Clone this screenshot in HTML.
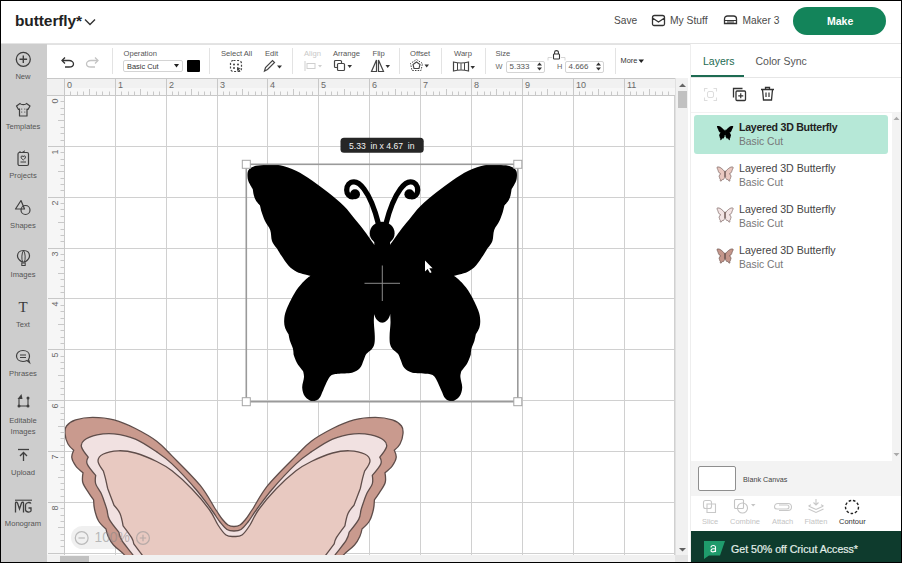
<!DOCTYPE html>
<html><head><meta charset="utf-8">
<style>
*{margin:0;padding:0;box-sizing:border-box}
html,body{width:902px;height:563px;overflow:hidden;background:#000}
body{font-family:"Liberation Sans",sans-serif;position:relative}
.a{position:absolute}
.t{position:absolute;white-space:nowrap;line-height:1}
#app{position:absolute;left:1px;top:1px;width:900px;height:561px;background:#fff;overflow:hidden}
</style></head><body>
<div id="app"></div>
<!-- header -->
<div class="a" style="left:1px;top:1px;width:900px;height:42px;background:#fff"></div>
<div class="a" style="left:1px;top:43px;width:900px;height:1px;background:#e4e4e4"></div>
<div class="t" style="left:15px;top:13px;font-size:15.5px;font-weight:bold;color:#222;letter-spacing:-0.1px">butterfly*</div>
<svg class="a" style="left:83.5px;top:17.5px" width="12" height="8"><path d="M1 1.5 L6 6.5 L11 1.5" fill="none" stroke="#333" stroke-width="1.4"/></svg>
<div class="t" style="left:614px;top:16px;font-size:10.2px;color:#4a4a4a">Save</div>
<svg class="a" style="left:651px;top:14px" width="15" height="13"><path d="M3.5 1.5 L11.5 1.5 C12.7 1.5 13.5 2.3 13.5 3.5 L13.5 10 C13.5 10.8 12.8 11.5 12 11.5 L3 11.5 C2.2 11.5 1.5 10.8 1.5 10 L1.5 3.5 C1.5 2.3 2.3 1.5 3.5 1.5Z M1.5 4 L7.5 8 L13.5 4" fill="none" stroke="#333" stroke-width="1.3"/></svg>
<div class="t" style="left:670px;top:15.5px;font-size:10.3px;color:#4a4a4a">My Stuff</div>
<svg class="a" style="left:723px;top:15px" width="16" height="10"><path d="M1.5 8.5 L1.5 4 C1.5 2.2 2.8 1 4.5 1 L10.5 1 C12.2 1 13.5 2.2 13.5 4 L13.5 8.5 Z" fill="none" stroke="#333" stroke-width="1.3"/><path d="M1.5 5.5 L13.5 5.5 M4 7 L11 7" stroke="#333" stroke-width="1.1"/></svg>
<div class="t" style="left:742.5px;top:16px;font-size:10.2px;color:#4a4a4a">Maker 3</div>
<div class="a" style="left:793px;top:6.5px;width:93px;height:28px;border-radius:14px;background:#13845a"></div>
<div class="t" style="left:827px;top:15.5px;font-size:10.5px;font-weight:bold;color:#fff">Make</div>

<!-- sidebar -->
<div class="a" style="left:1px;top:44px;width:47px;height:518px;background:#cdcdcd"></div>


<!-- sidebar items -->
<svg class="a" style="left:15px;top:51px" width="17" height="17"><circle cx="8.3" cy="8.3" r="7" fill="none" stroke="#3f3f3f" stroke-width="1.3"/><path d="M8.3 4.5 L8.3 12.1 M4.5 8.3 L12.1 8.3" stroke="#3f3f3f" stroke-width="1.4"/></svg>
<div class="t" style="left:0px;width:46px;text-align:center;top:72.5px;font-size:7.6px;color:#555">New</div>
<svg class="a" style="left:15px;top:102px" width="17" height="16"><path d="M5 1.5 L1.5 4 L3.5 7.5 L4.5 7 L4.5 14 L12 14 L12 7 L13 7.5 L15 4 L11.5 1.5 C10.5 3 6 3 5 1.5Z" fill="none" stroke="#3f3f3f" stroke-width="1.2" stroke-linejoin="round"/><circle cx="6.7" cy="7" r=".6" fill="#3f3f3f"/><circle cx="9.8" cy="7" r=".6" fill="#3f3f3f"/><circle cx="6.7" cy="10" r=".6" fill="#3f3f3f"/><circle cx="9.8" cy="10" r=".6" fill="#3f3f3f"/></svg>
<div class="t" style="left:0px;width:46px;text-align:center;top:122.5px;font-size:7.6px;color:#555">Templates</div>
<svg class="a" style="left:16px;top:150px" width="15" height="17"><rect x="2" y="2.5" width="10.5" height="13" rx="1.5" fill="none" stroke="#3f3f3f" stroke-width="1.2"/><path d="M4 2.5 L4 1 M6 2.5 L9 0.8" stroke="#3f3f3f" stroke-width="1"/><path d="M5 7 C5 5.5 7.2 5.5 7.2 7 C7.2 5.5 9.5 5.5 9.5 7 C9.5 8.5 7.2 10 7.2 10 C7.2 10 5 8.5 5 7Z" fill="none" stroke="#3f3f3f" stroke-width="1"/><path d="M4.5 12 L10 12" stroke="#3f3f3f" stroke-width="1"/></svg>
<div class="t" style="left:0px;width:46px;text-align:center;top:172px;font-size:7.6px;color:#555">Projects</div>
<svg class="a" style="left:14px;top:199px" width="19" height="17"><path d="M7 1.5 L1.5 10 L10.5 10 Z" fill="none" stroke="#3f3f3f" stroke-width="1.2" stroke-linejoin="round"/><circle cx="11.5" cy="11" r="4.5" fill="none" stroke="#3f3f3f" stroke-width="1.2"/></svg>
<div class="t" style="left:0px;width:46px;text-align:center;top:221.5px;font-size:7.6px;color:#555">Shapes</div>
<svg class="a" style="left:16px;top:249px" width="15" height="18"><path d="M7.5 1.5 C3.5 1.5 1.5 4 1.5 7 C1.5 10 4.5 12 6 13 L9 13 C10.5 12 13.5 10 13.5 7 C13.5 4 11.5 1.5 7.5 1.5Z" fill="none" stroke="#3f3f3f" stroke-width="1.2"/><path d="M7.5 1.5 C5.5 4 5.5 10 6.5 13 M7.5 1.5 C9.5 4 9.5 10 8.5 13" fill="none" stroke="#3f3f3f" stroke-width="1"/><rect x="5.8" y="14" width="3.4" height="2.5" fill="none" stroke="#3f3f3f" stroke-width="1"/></svg>
<div class="t" style="left:0px;width:46px;text-align:center;top:271px;font-size:7.6px;color:#555">Images</div>
<div class="t" style="left:0px;width:46px;text-align:center;top:299.5px;font-size:15px;font-family:'Liberation Serif',serif;color:#3a3a3a">T</div>
<div class="t" style="left:0px;width:46px;text-align:center;top:320.5px;font-size:7.6px;color:#555">Text</div>
<svg class="a" style="left:15px;top:349px" width="17" height="16"><path d="M8 1.5 C4 1.5 1.5 4 1.5 7 C1.5 10 4 12.5 8 12.5 C9.5 12.5 11 12 12 11.5 L14.5 13.5 L13.5 10.5 C14.2 9.5 14.5 8.3 14.5 7 C14.5 4 12 1.5 8 1.5Z" fill="none" stroke="#3f3f3f" stroke-width="1.2"/><path d="M5 6 L11 6 M5 8.5 L11 8.5" stroke="#3f3f3f" stroke-width="1.1"/></svg>
<div class="t" style="left:0px;width:46px;text-align:center;top:370px;font-size:7.6px;color:#555">Phrases</div>
<svg class="a" style="left:15px;top:393px" width="17" height="16"><path d="M4 5.5 L4 13 L13 13 L13 5.5" fill="none" stroke="#3f3f3f" stroke-width="1.1"/><circle cx="4" cy="13" r="1.5" fill="#3f3f3f"/><circle cx="13" cy="13" r="1.5" fill="#3f3f3f"/><circle cx="13" cy="5" r="1.5" fill="#3f3f3f"/><path d="M6.5 1 L2.5 6 L7.5 6Z" fill="#3f3f3f"/></svg>
<div class="t" style="left:0px;width:46px;text-align:center;top:416.5px;font-size:7.6px;color:#555">Editable</div>
<div class="t" style="left:0px;width:46px;text-align:center;top:427.5px;font-size:7.6px;color:#555">Images</div>
<svg class="a" style="left:16px;top:448px" width="15" height="14"><path d="M2 1.5 L13 1.5" stroke="#3f3f3f" stroke-width="1.3"/><path d="M7.5 13 L7.5 5 M4 8 L7.5 4.5 L11 8" fill="none" stroke="#3f3f3f" stroke-width="1.3"/></svg>
<div class="t" style="left:0px;width:46px;text-align:center;top:468.5px;font-size:7.6px;color:#555">Upload</div>
<svg class="a" style="left:14px;top:499px" width="19" height="15"><path d="M1 1.2 L18 1.2" stroke="#3f3f3f" stroke-width="1.1"/><path d="M1.5 13.5 L1.5 4 C1.5 3 3 3 3.5 4 L5.5 10 L7.5 4 C8 3 9.5 3 9.5 4 L9.5 13.5" fill="none" stroke="#3f3f3f" stroke-width="1.3"/><path d="M17 4.5 C16 3 12 3 11.5 6 L11.5 11 C12 13.5 16 13.5 17 12 L17 9 L14.5 9" fill="none" stroke="#3f3f3f" stroke-width="1.3"/></svg>
<div class="t" style="left:0px;width:46px;text-align:center;top:519.5px;font-size:7.6px;color:#555">Monogram</div>

<!-- toolbar -->
<div class="a" style="left:47px;top:44px;width:643px;height:34px;background:#fff;border-top:1px solid #e2e2e2"></div>


<!-- toolbar content -->
<svg class="a" style="left:59px;top:55px" width="16" height="13"><path d="M3.5 5.5 L10 5.5 C13 5.5 14.5 7.5 14.5 9 C14.5 10.5 13 12 10 12 L6 12" fill="none" stroke="#333" stroke-width="1.3"/><path d="M6 2.5 L3 5.5 L6 8.5" fill="none" stroke="#333" stroke-width="1.3"/></svg>
<svg class="a" style="left:85px;top:55px" width="16" height="13"><path d="M12.5 5.5 L6 5.5 C3 5.5 1.5 7.5 1.5 9 C1.5 10.5 3 12 6 12 L10 12" fill="none" stroke="#c4c4c4" stroke-width="1.3"/><path d="M10 2.5 L13 5.5 L10 8.5" fill="none" stroke="#c4c4c4" stroke-width="1.3"/></svg>
<div class="a" style="left:112px;top:48px;width:1px;height:26px;background:#e3e3e3"></div>
<div class="t" style="left:123.5px;top:49.5px;font-size:7.6px;color:#555">Operation</div>
<div class="a" style="left:123px;top:60px;width:60px;height:12px;border:1px solid #d4d4d4;border-radius:2px;background:#fff"></div>
<div class="t" style="left:127px;top:62.5px;font-size:7.4px;color:#333">Basic Cut</div>
<svg class="a" style="left:174px;top:64px" width="6" height="4"><path d="M0 0 L5 0 L2.5 3.5Z" fill="#222"/></svg>
<div class="a" style="left:187px;top:60px;width:13px;height:12px;background:#000;border-radius:1px"></div>
<div class="a" style="left:209px;top:48px;width:1px;height:26px;background:#e3e3e3"></div>
<div class="t" style="left:221px;top:49.5px;font-size:7.6px;color:#555">Select All</div>
<svg class="a" style="left:229px;top:59px" width="15" height="14"><rect x="1.5" y="1.5" width="11" height="11" rx="3" fill="none" stroke="#444" stroke-width="1.2" stroke-dasharray="2 1.6"/><circle cx="5" cy="5.5" r="1" fill="#444"/><circle cx="9" cy="5.5" r="1" fill="#444"/><circle cx="5" cy="9" r="1" fill="#444"/><path d="M8 8 L12 9.5 L10 10 L11.5 12.5 L10.5 13 L9 11 L8 12.5Z" fill="#444"/></svg>
<div class="t" style="left:265px;top:49.5px;font-size:7.6px;color:#555">Edit</div>
<svg class="a" style="left:262px;top:59px" width="22" height="14"><path d="M2.5 12 L3.5 8.5 L10.5 1.5 L12.5 3.5 L5.5 10.5 Z" fill="none" stroke="#444" stroke-width="1.2"/><path d="M15 6.5 L20 6.5 L17.5 9.5Z" fill="#333"/></svg>
<div class="a" style="left:291.5px;top:48px;width:1px;height:26px;background:#e3e3e3"></div>
<div class="t" style="left:304px;top:49.5px;font-size:7.6px;color:#c8c8c8">Align</div>
<svg class="a" style="left:304px;top:60px" width="20" height="12"><path d="M1 1 L1 11" stroke="#cfcfcf" stroke-width="1"/><rect x="3" y="3.5" width="8" height="5" fill="none" stroke="#cfcfcf" stroke-width="1"/><path d="M14 5 L18 5 L16 7.5Z" fill="#cfcfcf"/></svg>
<div class="t" style="left:333px;top:49.5px;font-size:7.6px;color:#555">Arrange</div>
<svg class="a" style="left:333px;top:59px" width="21" height="14"><rect x="1.5" y="1.5" width="7" height="7" rx="1" fill="none" stroke="#444" stroke-width="1.2"/><rect x="4.5" y="4.5" width="7" height="7" rx="1" fill="#fff" stroke="#444" stroke-width="1.2"/><path d="M14.5 6 L19 6 L16.7 9Z" fill="#333"/></svg>
<div class="t" style="left:372.5px;top:49.5px;font-size:7.6px;color:#555">Flip</div>
<svg class="a" style="left:370px;top:59px" width="21" height="14"><path d="M6.5 1 L1.5 12.5 L6.5 12.5Z M8.5 1 L13.5 12.5 L8.5 12.5Z" fill="none" stroke="#444" stroke-width="1.2"/><path d="M15.5 6 L20 6 L17.7 9Z" fill="#333"/></svg>
<div class="a" style="left:399px;top:48px;width:1px;height:26px;background:#e3e3e3"></div>
<div class="t" style="left:410px;top:49.5px;font-size:7.6px;color:#555">Offset</div>
<svg class="a" style="left:409px;top:58px" width="22" height="15"><path d="M7.5 1.5 L13.5 5.5 L12 12.5 L3 12.5 L1.5 5.5Z" fill="none" stroke="#444" stroke-width="1" stroke-dasharray="1.5 1.2"/><path d="M7.5 4 L11 6.5 L10 10.5 L5 10.5 L4 6.5Z" fill="none" stroke="#444" stroke-width="1.1"/><path d="M15.5 6.5 L20 6.5 L17.7 9.5Z" fill="#333"/></svg>
<div class="a" style="left:440.5px;top:48px;width:1px;height:26px;background:#e3e3e3"></div>
<div class="t" style="left:454px;top:49.5px;font-size:7.6px;color:#555">Warp</div>
<svg class="a" style="left:452px;top:60px" width="24" height="13"><path d="M1.5 2 Q9 4 16.5 2 L16.5 11 Q9 9 1.5 11Z" fill="none" stroke="#444" stroke-width="1.2"/><path d="M5.5 3 L5.5 10 M9 3.3 L9 9.7 M12.5 3 L12.5 10" stroke="#444" stroke-width="1"/><path d="M18.5 6 L23 6 L20.7 9Z" fill="#333"/></svg>
<div class="a" style="left:485px;top:48px;width:1px;height:26px;background:#e3e3e3"></div>
<div class="t" style="left:495.5px;top:49.5px;font-size:7.6px;color:#555">Size</div>
<div class="t" style="left:495.5px;top:62.5px;font-size:7.4px;color:#666">W</div>
<div class="a" style="left:506px;top:60.5px;width:39px;height:12px;border:1px solid #d4d4d4;border-radius:2px;background:#fff"></div>
<div class="t" style="left:509.5px;top:62.5px;font-size:8px;color:#555">5.333</div>
<svg class="a" style="left:536px;top:61px" width="7" height="11"><path d="M1 4.5 L3.5 1.5 L6 4.5Z M1 6.5 L3.5 9.5 L6 6.5Z" fill="#333"/></svg>
<svg class="a" style="left:547px;top:49px" width="19" height="12"><rect x="6.5" y="5" width="6" height="5" rx="0.8" fill="none" stroke="#333" stroke-width="1.1"/><path d="M7.6 5 L7.6 3.3 C7.6 1 11.4 1 11.4 3.3 L11.4 5" fill="none" stroke="#333" stroke-width="1.1"/><path d="M1 11.5 L1 8.5 L5 8.5 M14 8.5 L18 8.5 L18 11.5" fill="none" stroke="#ccc" stroke-width="0.8"/></svg>
<div class="t" style="left:557px;top:62.5px;font-size:7.4px;color:#666">H</div>
<div class="a" style="left:565px;top:60.5px;width:39px;height:12px;border:1px solid #d4d4d4;border-radius:2px;background:#fff"></div>
<div class="t" style="left:568.5px;top:62.5px;font-size:8px;color:#555">4.666</div>
<svg class="a" style="left:595px;top:61px" width="7" height="11"><path d="M1 4.5 L3.5 1.5 L6 4.5Z M1 6.5 L3.5 9.5 L6 6.5Z" fill="#333"/></svg>
<div class="a" style="left:614.5px;top:48px;width:1px;height:26px;background:#e3e3e3"></div>
<div class="t" style="left:620.5px;top:57px;font-size:7.4px;color:#333">More</div>
<svg class="a" style="left:638px;top:58.5px" width="7" height="5"><path d="M0.5 0.5 L6 0.5 L3.2 4Z" fill="#222"/></svg>

<!-- canvas -->
<div class="a" style="left:64px;top:95px;width:611px;height:460px;background:#fff"></div>
<svg style="position:absolute;left:0;top:0" width="902" height="563"><g stroke="#d0d0d0" stroke-width="1"><line x1="64.5" y1="95" x2="64.5" y2="555" /><line x1="115.5" y1="95" x2="115.5" y2="555" /><line x1="166.5" y1="95" x2="166.5" y2="555" /><line x1="217.5" y1="95" x2="217.5" y2="555" /><line x1="267.5" y1="95" x2="267.5" y2="555" /><line x1="318.5" y1="95" x2="318.5" y2="555" /><line x1="369.5" y1="95" x2="369.5" y2="555" /><line x1="420.5" y1="95" x2="420.5" y2="555" /><line x1="471.5" y1="95" x2="471.5" y2="555" /><line x1="522.5" y1="95" x2="522.5" y2="555" /><line x1="573.5" y1="95" x2="573.5" y2="555" /><line x1="624.5" y1="95" x2="624.5" y2="555" /><line x1="674.5" y1="95" x2="674.5" y2="555" /><line x1="64" y1="95.5" x2="675" y2="95.5" /><line x1="64" y1="146.5" x2="675" y2="146.5" /><line x1="64" y1="197.5" x2="675" y2="197.5" /><line x1="64" y1="248.5" x2="675" y2="248.5" /><line x1="64" y1="298.5" x2="675" y2="298.5" /><line x1="64" y1="349.5" x2="675" y2="349.5" /><line x1="64" y1="400.5" x2="675" y2="400.5" /><line x1="64" y1="451.5" x2="675" y2="451.5" /><line x1="64" y1="502.5" x2="675" y2="502.5" /><line x1="64" y1="553.5" x2="675" y2="553.5" /></g></svg>
<div class="a" style="left:71px;top:526px;width:90px;height:23px;border-radius:11.5px;background:rgba(205,205,205,0.3)"></div>

<svg style="position:absolute;left:64px;top:95px" width="611" height="460" viewBox="64 95 611 460">
 <path d="M234.0 526.5 C236.0 526.5 238.1 526.2 240.0 525.0 C241.9 523.8 243.5 522.0 245.5 519.5 C247.5 517.0 248.2 515.7 252.0 510.0 C255.8 504.3 260.7 494.2 268.0 485.2 C275.3 476.2 288.8 463.2 296.0 455.9 C303.2 448.6 305.2 445.8 311.3 441.2 C317.4 436.6 325.5 432.1 332.6 428.5 C339.7 424.9 346.9 421.8 354.0 419.9 C361.1 418.0 368.9 417.4 375.3 417.4 C381.7 417.4 387.9 418.5 392.3 419.9 C396.7 421.3 399.7 423.7 401.5 426.0 C403.3 428.3 403.2 430.5 403.0 433.5 C402.8 436.5 401.4 441.2 400.0 444.0 C398.6 446.8 394.3 450.2 394.3 450.2 C394.3 450.2 396.5 454.9 396.2 457.5 C395.9 460.1 394.2 463.2 392.3 465.8 C390.4 468.4 385.0 472.8 385.0 472.8 C385.0 472.8 386.1 479.2 385.2 482.5 C384.3 485.8 381.4 489.5 379.6 492.4 C377.8 495.3 374.4 499.9 374.4 499.9 C374.4 499.9 374.2 506.0 373.4 509.5 C372.6 513.0 371.3 517.8 369.4 521.0 C367.5 524.2 362.0 529.0 362.0 529.0 C362.0 529.0 361.1 533.8 359.8 536.5 C358.6 539.2 357.2 542.0 354.5 545.0 C351.8 548.0 347.1 551.3 343.8 554.6 C340.6 557.9 335.0 565.0 335.0 565.0 C335.0 565.0 133.0 565.0 133.0 565.0 C133.0 565.0 127.4 557.9 124.2 554.6 C120.9 551.3 116.2 548.0 113.5 545.0 C110.8 542.0 109.4 539.2 108.2 536.5 C106.9 533.8 106.0 529.0 106.0 529.0 C106.0 529.0 100.5 524.2 98.6 521.0 C96.7 517.8 95.4 513.0 94.6 509.5 C93.8 506.0 93.6 499.9 93.6 499.9 C93.6 499.9 90.2 495.3 88.4 492.4 C86.6 489.5 83.7 485.8 82.8 482.5 C81.9 479.2 83.0 472.8 83.0 472.8 C83.0 472.8 77.6 468.4 75.7 465.8 C73.8 463.2 72.1 460.1 71.8 457.5 C71.5 454.9 73.7 450.2 73.7 450.2 C73.7 450.2 69.5 446.8 68.0 444.0 C66.5 441.2 65.2 436.5 65.0 433.5 C64.8 430.5 64.7 428.3 66.5 426.0 C68.3 423.7 71.3 421.3 75.7 419.9 C80.1 418.5 86.3 417.4 92.7 417.4 C99.1 417.4 106.9 418.0 114.0 419.9 C121.1 421.8 128.3 424.9 135.4 428.5 C142.5 432.1 150.6 436.6 156.7 441.2 C162.8 445.8 164.8 448.6 172.0 455.9 C179.2 463.2 192.7 476.2 200.0 485.2 C207.3 494.2 212.2 504.3 216.0 510.0 C219.8 515.7 220.5 517.0 222.5 519.5 C224.5 522.0 226.1 523.8 228.0 525.0 C229.9 526.2 232.0 526.5 234.0 526.5Z" fill="#c99a8e" stroke="#5f4d4a" stroke-width="1.3"/>
 <path d="M234.0 531.0 C236.3 531.0 238.7 531.0 241.0 529.5 C243.3 528.0 245.4 525.2 248.0 522.0 C250.6 518.8 252.3 515.4 256.3 510.0 C260.3 504.6 265.4 497.2 272.0 489.5 C278.6 481.8 289.4 470.2 296.0 463.9 C302.6 457.6 305.2 456.0 311.3 451.9 C317.4 447.8 325.5 442.1 332.6 439.1 C339.7 436.1 347.6 434.5 354.0 433.8 C360.4 433.1 366.0 433.8 371.0 434.9 C376.0 436.0 381.2 438.2 383.8 440.2 C386.4 442.2 387.2 444.2 386.5 447.0 C385.8 449.8 379.8 457.2 379.8 457.2 C379.8 457.2 382.1 461.0 380.8 464.0 C379.6 467.0 372.3 475.4 372.3 475.4 C372.3 475.4 373.2 480.9 372.3 483.9 C371.4 486.9 368.2 490.5 366.8 493.5 C365.4 496.5 363.6 502.0 363.6 502.0 C363.6 502.0 361.8 507.1 361.0 510.0 C360.2 512.9 360.7 515.7 358.7 519.4 C356.7 523.1 349.2 532.2 349.2 532.2 C349.2 532.2 348.3 537.0 346.0 540.7 C343.7 544.4 338.3 550.6 335.3 554.6 C332.3 558.6 328.0 565.0 328.0 565.0 C328.0 565.0 140.0 565.0 140.0 565.0 C140.0 565.0 135.7 558.6 132.7 554.6 C129.7 550.6 124.3 544.4 122.0 540.7 C119.7 537.0 118.8 532.2 118.8 532.2 C118.8 532.2 111.3 523.1 109.3 519.4 C107.3 515.7 107.8 512.9 107.0 510.0 C106.2 507.1 104.4 502.0 104.4 502.0 C104.4 502.0 102.6 496.5 101.2 493.5 C99.7 490.5 96.6 486.9 95.7 483.9 C94.8 480.9 95.7 475.4 95.7 475.4 C95.7 475.4 88.4 467.0 87.2 464.0 C85.9 461.0 88.2 457.2 88.2 457.2 C88.2 457.2 82.2 449.8 81.5 447.0 C80.8 444.2 81.6 442.2 84.2 440.2 C86.8 438.2 92.0 436.0 97.0 434.9 C102.0 433.8 107.6 433.1 114.0 433.8 C120.4 434.5 128.3 436.1 135.4 439.1 C142.5 442.1 150.6 447.8 156.7 451.9 C162.8 456.0 165.4 457.6 172.0 463.9 C178.6 470.2 189.4 481.8 196.0 489.5 C202.6 497.2 207.7 504.6 211.7 510.0 C215.7 515.4 217.4 518.8 220.0 522.0 C222.6 525.2 224.7 528.0 227.0 529.5 C229.3 531.0 231.7 531.0 234.0 531.0Z" fill="#f1e1e1" stroke="#5f4d4a" stroke-width="1.3"/>
 <path d="M234.0 536.5 C236.7 536.5 239.3 536.9 242.0 535.0 C244.7 533.1 247.3 529.2 250.0 525.0 C252.7 520.8 254.1 516.0 258.4 510.0 C262.7 504.0 269.7 495.5 276.0 489.0 C282.3 482.5 290.1 475.4 296.0 470.8 C301.9 466.2 305.2 464.5 311.3 461.5 C317.4 458.5 326.2 454.8 332.6 453.0 C339.0 451.2 344.4 450.6 349.7 450.8 C355.0 451.0 361.2 452.3 364.6 454.0 C368.0 455.7 370.0 458.1 370.0 461.0 C370.0 463.9 364.6 471.1 364.6 471.1 C364.6 471.1 363.2 475.8 362.5 478.6 C361.8 481.5 360.4 488.2 360.4 488.2 C360.4 488.2 358.3 493.9 357.2 496.7 C356.1 499.5 354.0 505.2 354.0 505.2 C354.0 505.2 349.5 510.1 348.0 513.5 C346.5 516.9 344.9 525.8 344.9 525.8 C344.9 525.8 338.2 534.6 336.4 537.6 C334.6 540.6 334.2 543.9 334.2 543.9 C334.2 543.9 328.4 551.7 325.7 555.2 C323.0 558.7 318.0 565.0 318.0 565.0 C318.0 565.0 150.0 565.0 150.0 565.0 C150.0 565.0 145.0 558.7 142.3 555.2 C139.6 551.7 133.8 543.9 133.8 543.9 C133.8 543.9 133.4 540.6 131.6 537.6 C129.8 534.6 123.1 525.8 123.1 525.8 C123.1 525.8 121.5 516.9 120.0 513.5 C118.5 510.1 114.0 505.2 114.0 505.2 C114.0 505.2 111.9 499.5 110.8 496.7 C109.7 493.9 107.6 488.2 107.6 488.2 C107.6 488.2 106.2 481.5 105.5 478.6 C104.8 475.8 103.4 471.1 103.4 471.1 C103.4 471.1 98.0 463.9 98.0 461.0 C98.0 458.1 100.0 455.7 103.4 454.0 C106.8 452.3 113.0 451.0 118.3 450.8 C123.6 450.6 129.0 451.2 135.4 453.0 C141.8 454.8 150.6 458.5 156.7 461.5 C162.8 464.5 166.1 466.2 172.0 470.8 C177.9 475.4 185.7 482.5 192.0 489.0 C198.3 495.5 205.3 504.0 209.6 510.0 C213.9 516.0 215.3 520.8 218.0 525.0 C220.7 529.2 223.3 533.1 226.0 535.0 C228.7 536.9 231.3 536.5 234.0 536.5Z" fill="#e8c9c1" stroke="#5f4d4a" stroke-width="1.3"/>
</svg>
<svg style="position:absolute;left:0;top:0" width="902" height="563">
<rect x="47" y="78" width="628" height="17" fill="#f1f1f1"/>
<rect x="47" y="95" width="17" height="460" fill="#f6f6f6"/>
<rect x="64" y="88" width="611" height="7" fill="#f7f7f7"/>
<g stroke="#c8c8c8" stroke-width="1"><line x1="70.50" y1="91.5" x2="70.50" y2="95" /><line x1="77.50" y1="91.5" x2="77.50" y2="95" /><line x1="83.50" y1="91.5" x2="83.50" y2="95" /><line x1="89.50" y1="89.0" x2="89.50" y2="95" /><line x1="96.50" y1="91.5" x2="96.50" y2="95" /><line x1="102.50" y1="91.5" x2="102.50" y2="95" /><line x1="109.50" y1="91.5" x2="109.50" y2="95" /><line x1="64.5" y1="79" x2="64.5" y2="95" /><line x1="121.50" y1="91.5" x2="121.50" y2="95" /><line x1="128.50" y1="91.5" x2="128.50" y2="95" /><line x1="134.50" y1="91.5" x2="134.50" y2="95" /><line x1="140.50" y1="89.0" x2="140.50" y2="95" /><line x1="147.50" y1="91.5" x2="147.50" y2="95" /><line x1="153.50" y1="91.5" x2="153.50" y2="95" /><line x1="159.50" y1="91.5" x2="159.50" y2="95" /><line x1="115.5" y1="79" x2="115.5" y2="95" /><line x1="172.50" y1="91.5" x2="172.50" y2="95" /><line x1="178.50" y1="91.5" x2="178.50" y2="95" /><line x1="185.50" y1="91.5" x2="185.50" y2="95" /><line x1="191.50" y1="89.0" x2="191.50" y2="95" /><line x1="198.50" y1="91.5" x2="198.50" y2="95" /><line x1="204.50" y1="91.5" x2="204.50" y2="95" /><line x1="210.50" y1="91.5" x2="210.50" y2="95" /><line x1="166.5" y1="79" x2="166.5" y2="95" /><line x1="223.50" y1="91.5" x2="223.50" y2="95" /><line x1="229.50" y1="91.5" x2="229.50" y2="95" /><line x1="236.50" y1="91.5" x2="236.50" y2="95" /><line x1="242.50" y1="89.0" x2="242.50" y2="95" /><line x1="248.50" y1="91.5" x2="248.50" y2="95" /><line x1="255.50" y1="91.5" x2="255.50" y2="95" /><line x1="261.50" y1="91.5" x2="261.50" y2="95" /><line x1="217.5" y1="79" x2="217.5" y2="95" /><line x1="274.50" y1="91.5" x2="274.50" y2="95" /><line x1="280.50" y1="91.5" x2="280.50" y2="95" /><line x1="287.50" y1="91.5" x2="287.50" y2="95" /><line x1="293.50" y1="89.0" x2="293.50" y2="95" /><line x1="299.50" y1="91.5" x2="299.50" y2="95" /><line x1="306.50" y1="91.5" x2="306.50" y2="95" /><line x1="312.50" y1="91.5" x2="312.50" y2="95" /><line x1="267.5" y1="79" x2="267.5" y2="95" /><line x1="325.50" y1="91.5" x2="325.50" y2="95" /><line x1="331.50" y1="91.5" x2="331.50" y2="95" /><line x1="337.50" y1="91.5" x2="337.50" y2="95" /><line x1="344.50" y1="89.0" x2="344.50" y2="95" /><line x1="350.50" y1="91.5" x2="350.50" y2="95" /><line x1="357.50" y1="91.5" x2="357.50" y2="95" /><line x1="363.50" y1="91.5" x2="363.50" y2="95" /><line x1="318.5" y1="79" x2="318.5" y2="95" /><line x1="376.50" y1="91.5" x2="376.50" y2="95" /><line x1="382.50" y1="91.5" x2="382.50" y2="95" /><line x1="388.50" y1="91.5" x2="388.50" y2="95" /><line x1="395.50" y1="89.0" x2="395.50" y2="95" /><line x1="401.50" y1="91.5" x2="401.50" y2="95" /><line x1="407.50" y1="91.5" x2="407.50" y2="95" /><line x1="414.50" y1="91.5" x2="414.50" y2="95" /><line x1="369.5" y1="79" x2="369.5" y2="95" /><line x1="426.50" y1="91.5" x2="426.50" y2="95" /><line x1="433.50" y1="91.5" x2="433.50" y2="95" /><line x1="439.50" y1="91.5" x2="439.50" y2="95" /><line x1="446.50" y1="89.0" x2="446.50" y2="95" /><line x1="452.50" y1="91.5" x2="452.50" y2="95" /><line x1="458.50" y1="91.5" x2="458.50" y2="95" /><line x1="465.50" y1="91.5" x2="465.50" y2="95" /><line x1="420.5" y1="79" x2="420.5" y2="95" /><line x1="477.50" y1="91.5" x2="477.50" y2="95" /><line x1="484.50" y1="91.5" x2="484.50" y2="95" /><line x1="490.50" y1="91.5" x2="490.50" y2="95" /><line x1="496.50" y1="89.0" x2="496.50" y2="95" /><line x1="503.50" y1="91.5" x2="503.50" y2="95" /><line x1="509.50" y1="91.5" x2="509.50" y2="95" /><line x1="515.50" y1="91.5" x2="515.50" y2="95" /><line x1="471.5" y1="79" x2="471.5" y2="95" /><line x1="528.50" y1="91.5" x2="528.50" y2="95" /><line x1="535.50" y1="91.5" x2="535.50" y2="95" /><line x1="541.50" y1="91.5" x2="541.50" y2="95" /><line x1="547.50" y1="89.0" x2="547.50" y2="95" /><line x1="554.50" y1="91.5" x2="554.50" y2="95" /><line x1="560.50" y1="91.5" x2="560.50" y2="95" /><line x1="566.50" y1="91.5" x2="566.50" y2="95" /><line x1="522.5" y1="79" x2="522.5" y2="95" /><line x1="579.50" y1="91.5" x2="579.50" y2="95" /><line x1="585.50" y1="91.5" x2="585.50" y2="95" /><line x1="592.50" y1="91.5" x2="592.50" y2="95" /><line x1="598.50" y1="89.0" x2="598.50" y2="95" /><line x1="604.50" y1="91.5" x2="604.50" y2="95" /><line x1="611.50" y1="91.5" x2="611.50" y2="95" /><line x1="617.50" y1="91.5" x2="617.50" y2="95" /><line x1="573.5" y1="79" x2="573.5" y2="95" /><line x1="630.50" y1="91.5" x2="630.50" y2="95" /><line x1="636.50" y1="91.5" x2="636.50" y2="95" /><line x1="643.50" y1="91.5" x2="643.50" y2="95" /><line x1="649.50" y1="89.0" x2="649.50" y2="95" /><line x1="655.50" y1="91.5" x2="655.50" y2="95" /><line x1="662.50" y1="91.5" x2="662.50" y2="95" /><line x1="668.50" y1="91.5" x2="668.50" y2="95" /><line x1="624.5" y1="79" x2="624.5" y2="95" /><line x1="60.5" y1="101.50" x2="64" y2="101.50" /><line x1="60.5" y1="108.50" x2="64" y2="108.50" /><line x1="60.5" y1="114.50" x2="64" y2="114.50" /><line x1="58.0" y1="120.50" x2="64" y2="120.50" /><line x1="60.5" y1="127.50" x2="64" y2="127.50" /><line x1="60.5" y1="133.50" x2="64" y2="133.50" /><line x1="60.5" y1="140.50" x2="64" y2="140.50" /><line x1="48" y1="95.5" x2="64" y2="95.5" /><line x1="60.5" y1="152.50" x2="64" y2="152.50" /><line x1="60.5" y1="159.50" x2="64" y2="159.50" /><line x1="60.5" y1="165.50" x2="64" y2="165.50" /><line x1="58.0" y1="171.50" x2="64" y2="171.50" /><line x1="60.5" y1="178.50" x2="64" y2="178.50" /><line x1="60.5" y1="184.50" x2="64" y2="184.50" /><line x1="60.5" y1="190.50" x2="64" y2="190.50" /><line x1="48" y1="146.5" x2="64" y2="146.5" /><line x1="60.5" y1="203.50" x2="64" y2="203.50" /><line x1="60.5" y1="209.50" x2="64" y2="209.50" /><line x1="60.5" y1="216.50" x2="64" y2="216.50" /><line x1="58.0" y1="222.50" x2="64" y2="222.50" /><line x1="60.5" y1="229.50" x2="64" y2="229.50" /><line x1="60.5" y1="235.50" x2="64" y2="235.50" /><line x1="60.5" y1="241.50" x2="64" y2="241.50" /><line x1="48" y1="197.5" x2="64" y2="197.5" /><line x1="60.5" y1="254.50" x2="64" y2="254.50" /><line x1="60.5" y1="260.50" x2="64" y2="260.50" /><line x1="60.5" y1="267.50" x2="64" y2="267.50" /><line x1="58.0" y1="273.50" x2="64" y2="273.50" /><line x1="60.5" y1="279.50" x2="64" y2="279.50" /><line x1="60.5" y1="286.50" x2="64" y2="286.50" /><line x1="60.5" y1="292.50" x2="64" y2="292.50" /><line x1="48" y1="248.5" x2="64" y2="248.5" /><line x1="60.5" y1="305.50" x2="64" y2="305.50" /><line x1="60.5" y1="311.50" x2="64" y2="311.50" /><line x1="60.5" y1="318.50" x2="64" y2="318.50" /><line x1="58.0" y1="324.50" x2="64" y2="324.50" /><line x1="60.5" y1="330.50" x2="64" y2="330.50" /><line x1="60.5" y1="337.50" x2="64" y2="337.50" /><line x1="60.5" y1="343.50" x2="64" y2="343.50" /><line x1="48" y1="298.5" x2="64" y2="298.5" /><line x1="60.5" y1="356.50" x2="64" y2="356.50" /><line x1="60.5" y1="362.50" x2="64" y2="362.50" /><line x1="60.5" y1="368.50" x2="64" y2="368.50" /><line x1="58.0" y1="375.50" x2="64" y2="375.50" /><line x1="60.5" y1="381.50" x2="64" y2="381.50" /><line x1="60.5" y1="388.50" x2="64" y2="388.50" /><line x1="60.5" y1="394.50" x2="64" y2="394.50" /><line x1="48" y1="349.5" x2="64" y2="349.5" /><line x1="60.5" y1="407.50" x2="64" y2="407.50" /><line x1="60.5" y1="413.50" x2="64" y2="413.50" /><line x1="60.5" y1="419.50" x2="64" y2="419.50" /><line x1="58.0" y1="426.50" x2="64" y2="426.50" /><line x1="60.5" y1="432.50" x2="64" y2="432.50" /><line x1="60.5" y1="438.50" x2="64" y2="438.50" /><line x1="60.5" y1="445.50" x2="64" y2="445.50" /><line x1="48" y1="400.5" x2="64" y2="400.5" /><line x1="60.5" y1="457.50" x2="64" y2="457.50" /><line x1="60.5" y1="464.50" x2="64" y2="464.50" /><line x1="60.5" y1="470.50" x2="64" y2="470.50" /><line x1="58.0" y1="477.50" x2="64" y2="477.50" /><line x1="60.5" y1="483.50" x2="64" y2="483.50" /><line x1="60.5" y1="489.50" x2="64" y2="489.50" /><line x1="60.5" y1="496.50" x2="64" y2="496.50" /><line x1="48" y1="451.5" x2="64" y2="451.5" /><line x1="60.5" y1="508.50" x2="64" y2="508.50" /><line x1="60.5" y1="515.50" x2="64" y2="515.50" /><line x1="60.5" y1="521.50" x2="64" y2="521.50" /><line x1="58.0" y1="527.50" x2="64" y2="527.50" /><line x1="60.5" y1="534.50" x2="64" y2="534.50" /><line x1="60.5" y1="540.50" x2="64" y2="540.50" /><line x1="60.5" y1="546.50" x2="64" y2="546.50" /><line x1="48" y1="502.5" x2="64" y2="502.5" /><line x1="60.5" y1="559.50" x2="64" y2="559.50" /><line x1="60.5" y1="566.50" x2="64" y2="566.50" /><line x1="60.5" y1="572.50" x2="64" y2="572.50" /><line x1="58.0" y1="578.50" x2="64" y2="578.50" /><line x1="60.5" y1="585.50" x2="64" y2="585.50" /><line x1="60.5" y1="591.50" x2="64" y2="591.50" /><line x1="60.5" y1="597.50" x2="64" y2="597.50" /><line x1="48" y1="553.5" x2="64" y2="553.5" />
<line x1="47" y1="78.5" x2="675" y2="78.5"/>
<line x1="47" y1="95.5" x2="675" y2="95.5"/>
<line x1="64.5" y1="78" x2="64.5" y2="555"/>
</g>
<g font-family="Liberation Sans, sans-serif" font-size="9" fill="#6a6a6a"><text x="67" y="88">0</text><text x="118" y="88">1</text><text x="169" y="88">2</text><text x="220" y="88">3</text><text x="270" y="88">4</text><text x="321" y="88">5</text><text x="372" y="88">6</text><text x="423" y="88">7</text><text x="474" y="88">8</text><text x="525" y="88">9</text><text x="576" y="88">10</text><text x="627" y="88">11</text><text transform="translate(57.6 103.6) rotate(-90)" x="0" y="0">0</text><text transform="translate(57.6 154.6) rotate(-90)" x="0" y="0">1</text><text transform="translate(57.6 205.6) rotate(-90)" x="0" y="0">2</text><text transform="translate(57.6 256.6) rotate(-90)" x="0" y="0">3</text><text transform="translate(57.6 306.6) rotate(-90)" x="0" y="0">4</text><text transform="translate(57.6 357.6) rotate(-90)" x="0" y="0">5</text><text transform="translate(57.6 408.6) rotate(-90)" x="0" y="0">6</text><text transform="translate(57.6 459.6) rotate(-90)" x="0" y="0">7</text><text transform="translate(57.6 510.6) rotate(-90)" x="0" y="0">8</text><text transform="translate(57.6 561.6) rotate(-90)" x="0" y="0">9</text></g>
</svg>
<!-- vertical scrollbar -->
<div class="a" style="left:675px;top:78px;width:15px;height:484px;background:#fff"></div><div class="a" style="left:675px;top:78px;width:13px;height:484px;background:#f1f1f1;border-left:1px solid #e0e0e0"></div>
<div class="a" style="left:677.5px;top:91px;width:9px;height:17px;background:#c1c1c1"></div>
<svg class="a" style="left:677.5px;top:82px" width="9" height="6"><path d="M1 5 L4.5 1.5 L8 5Z" fill="#666"/></svg>
<svg class="a" style="left:677.5px;top:546.5px" width="9" height="6"><path d="M1 1 L4.5 4.5 L8 1Z" fill="#606060"/></svg>
<!-- horizontal scrollbar -->
<div class="a" style="left:47px;top:555px;width:628px;height:7px;background:#f1f1f1"></div>
<div class="a" style="left:60px;top:556px;width:29px;height:6px;background:#c1c1c1"></div>
<div class="a" style="left:675px;top:555px;width:13px;height:7px;background:#e4e4e4"></div>


<svg style="position:absolute;left:0;top:0" width="902" height="563" viewBox="0 0 902 563">
 <path d="M382.2 245.0 C382.2 245.0 374.5 245.0 374.5 245.0 C374.5 245.0 368.1 235.7 364.8 231.4 C361.6 227.1 358.5 223.4 355.0 219.2 C351.5 214.9 348.4 210.4 343.9 205.9 C339.4 201.4 333.2 196.6 327.9 192.3 C322.6 188.1 317.3 184.0 312.0 180.4 C306.7 176.8 301.3 173.3 296.0 170.8 C290.7 168.3 285.4 166.2 280.0 165.2 C274.6 164.2 267.9 164.8 263.5 165.0 C259.1 165.2 256.4 165.4 253.8 166.4 C251.2 167.4 249.0 168.8 248.0 171.0 C247.0 173.2 247.5 177.3 247.9 179.6 C248.3 181.9 249.5 183.4 250.3 185.0 C251.1 186.6 252.8 189.3 252.8 189.3 C252.8 189.3 253.3 193.3 253.8 195.2 C254.3 197.1 254.9 198.8 255.9 200.5 C256.9 202.2 260.0 205.5 260.0 205.5 C260.0 205.5 260.8 209.4 261.6 212.0 C262.4 214.6 263.6 218.0 265.0 221.0 C266.4 224.0 269.0 226.7 270.2 230.0 C271.4 233.3 270.9 237.9 272.0 241.0 C273.1 244.1 277.0 248.5 277.0 248.5 C277.0 248.5 279.4 252.8 281.3 255.6 C283.2 258.4 285.8 262.8 288.4 265.5 C291.0 268.2 293.3 270.2 297.0 271.9 C300.7 273.6 310.4 275.8 310.4 275.8 C310.4 275.8 305.3 279.6 302.6 282.6 C299.9 285.6 296.8 289.4 294.1 294.0 C291.4 298.6 288.0 305.7 286.3 310.0 C284.6 314.3 284.4 317.1 284.2 320.0 C284.0 322.9 284.3 325.1 285.0 327.5 C285.7 329.9 288.5 334.1 288.5 334.1 C288.5 334.1 289.3 338.6 290.0 341.0 C290.7 343.4 292.3 346.2 292.9 348.5 C293.5 350.8 293.6 354.5 293.6 354.5 C293.6 354.5 295.4 360.2 297.0 363.0 C298.6 365.8 303.0 371.0 303.0 371.0 C303.0 371.0 304.1 374.2 304.0 377.0 C303.9 379.8 302.0 384.4 302.2 387.7 C302.4 390.9 303.3 394.2 305.0 396.5 C306.7 398.8 309.9 400.9 312.2 401.2 C314.5 401.5 317.1 400.4 319.0 398.5 C320.9 396.6 321.5 393.5 323.3 389.9 C325.1 386.2 327.6 379.3 330.0 376.6 C332.4 373.9 334.0 374.5 337.7 373.8 C341.4 373.1 348.3 373.7 352.0 372.7 C355.7 371.7 358.1 370.1 360.0 368.0 C361.9 365.9 362.6 362.3 363.7 359.9 C364.8 357.5 365.2 355.5 366.5 353.8 C367.8 352.1 370.2 351.1 371.5 349.5 C372.8 347.9 373.6 346.8 374.2 344.5 C374.8 342.2 374.9 339.6 374.8 336.0 C374.8 332.4 374.0 326.7 373.9 323.0 C373.8 319.3 374.2 313.9 374.2 313.9 C374.2 313.9 377.2 318.6 378.5 320.0 C379.8 321.4 382.2 322.5 382.2 322.5 C382.2 322.5 382.2 245.0 382.2 245.0Z" fill="#000"/>
 <path d="M382.2 245.0 C382.2 245.0 389.9 245.0 389.9 245.0 C389.9 245.0 396.3 235.7 399.6 231.4 C402.8 227.1 405.9 223.4 409.4 219.2 C412.9 214.9 416.0 210.4 420.5 205.9 C425.0 201.4 431.2 196.6 436.5 192.3 C441.8 188.1 447.1 184.0 452.4 180.4 C457.7 176.8 463.1 173.3 468.4 170.8 C473.7 168.3 479.0 166.2 484.4 165.2 C489.8 164.2 496.5 164.8 500.9 165.0 C505.3 165.2 508.0 165.4 510.6 166.4 C513.2 167.4 515.4 168.8 516.4 171.0 C517.4 173.2 516.9 177.3 516.5 179.6 C516.1 181.9 514.9 183.4 514.1 185.0 C513.3 186.6 511.6 189.3 511.6 189.3 C511.6 189.3 511.1 193.3 510.6 195.2 C510.1 197.1 509.5 198.8 508.5 200.5 C507.5 202.2 504.4 205.5 504.4 205.5 C504.4 205.5 503.6 209.4 502.8 212.0 C502.0 214.6 500.8 218.0 499.4 221.0 C498.0 224.0 495.4 226.7 494.2 230.0 C493.0 233.3 493.5 237.9 492.4 241.0 C491.3 244.1 487.4 248.5 487.4 248.5 C487.4 248.5 485.0 252.8 483.1 255.6 C481.2 258.4 478.6 262.8 476.0 265.5 C473.4 268.2 471.1 270.2 467.4 271.9 C463.7 273.6 454.0 275.8 454.0 275.8 C454.0 275.8 459.1 279.6 461.8 282.6 C464.5 285.6 467.6 289.4 470.3 294.0 C473.0 298.6 476.4 305.7 478.1 310.0 C479.8 314.3 480.0 317.1 480.2 320.0 C480.4 322.9 480.1 325.1 479.4 327.5 C478.7 329.9 475.9 334.1 475.9 334.1 C475.9 334.1 475.1 338.6 474.4 341.0 C473.7 343.4 472.1 346.2 471.5 348.5 C470.9 350.8 470.8 354.5 470.8 354.5 C470.8 354.5 469.0 360.2 467.4 363.0 C465.8 365.8 461.4 371.0 461.4 371.0 C461.4 371.0 460.3 374.2 460.4 377.0 C460.5 379.8 462.4 384.4 462.2 387.7 C462.0 390.9 461.1 394.2 459.4 396.5 C457.7 398.8 454.5 400.9 452.2 401.2 C449.9 401.5 447.2 400.4 445.4 398.5 C443.5 396.6 442.9 393.5 441.1 389.9 C439.3 386.2 436.8 379.3 434.4 376.6 C432.0 373.9 430.4 374.5 426.7 373.8 C423.0 373.1 416.1 373.7 412.4 372.7 C408.7 371.7 406.3 370.1 404.4 368.0 C402.4 365.9 401.8 362.3 400.7 359.9 C399.6 357.5 399.2 355.5 397.9 353.8 C396.6 352.1 394.2 351.1 392.9 349.5 C391.6 347.9 390.8 346.8 390.2 344.5 C389.6 342.2 389.5 339.6 389.6 336.0 C389.6 332.4 390.4 326.7 390.5 323.0 C390.6 319.3 390.2 313.9 390.2 313.9 C390.2 313.9 387.2 318.6 385.9 320.0 C384.6 321.4 382.2 322.5 382.2 322.5 C382.2 322.5 382.2 245.0 382.2 245.0Z" fill="#000"/>
 <path d="M374.3 238 L390.1 238 L390.1 313.9 C389.5 318.5, 386 322.5, 382.2 322.5 C378.4 322.5, 374.9 318.5, 374.3 313.9 Z" fill="#000"/>
 <ellipse cx="382.2" cy="233.2" rx="12.4" ry="11.5" fill="#000"/>
 <path d="M378.5 224.0 C375.5 212.0 370.0 197.0 364.0 189.0 C360.0 183.5 357.0 181.8 354.0 181.8 C349.5 181.8 346.7 185.5 346.7 190.0 C346.7 194.0 349.5 196.8 352.5 196.8 C354.0 196.8 355.0 195.5 355.0 194.2" fill="none" stroke="#000" stroke-width="5.3" stroke-linecap="round"/>
 <path d="M385.9 224.0 C388.9 212.0 394.4 197.0 400.4 189.0 C404.4 183.5 407.4 181.8 410.4 181.8 C414.9 181.8 417.7 185.5 417.7 190.0 C417.7 194.0 414.9 196.8 411.9 196.8 C410.4 196.8 409.4 195.5 409.4 194.2" fill="none" stroke="#000" stroke-width="5.3" stroke-linecap="round"/>
 <circle cx="355" cy="194.2" r="5" fill="#000"/>
 <circle cx="409.4" cy="194.2" r="5" fill="#000"/>
 <line x1="364.5" y1="283.3" x2="400" y2="283.3" stroke="#8a8a8a" stroke-width="1"/>
 <line x1="382.3" y1="265.5" x2="382.3" y2="301" stroke="#8a8a8a" stroke-width="1"/>
 <rect x="246.3" y="164.3" width="271.5" height="237.4" fill="none" stroke="#9a9a9a" stroke-width="1.6"/>
 <g fill="#fff" stroke="#a5a5a5" stroke-width="1"><rect x="242.3" y="160.3" width="8" height="8"/><rect x="513.8" y="160.3" width="8" height="8"/><rect x="242.3" y="397.7" width="8" height="8"/><rect x="513.8" y="397.7" width="8" height="8"/></g>
 <rect x="340.5" y="137.8" width="83.2" height="15" rx="3.5" fill="#262626"/>
 <text x="349" y="148.6" font-family="Liberation Sans, sans-serif" font-size="8.6" fill="#f2f2f2" xml:space="preserve">5.33  in x 4.67  in</text>
 <path d="M425 260.5 L425 271.5 L427.6 269 L430 273 L431.6 272.2 L429.3 268.2 L432.6 268.2 Z" fill="#fff"/>
</svg>


<!-- zoom control -->
<svg class="a" style="left:74px;top:530px" width="16" height="16"><circle cx="7.7" cy="8" r="6.4" fill="none" stroke="rgba(150,150,150,0.6)" stroke-width="1.2"/><path d="M4.5 8 L10.9 8" stroke="rgba(150,150,150,0.6)" stroke-width="1.2"/></svg>
<div class="t" style="left:94.5px;top:531px;font-size:13.8px;color:rgba(135,135,135,0.55)">100%</div>
<svg class="a" style="left:135px;top:530px" width="16" height="16"><circle cx="8" cy="8" r="6.4" fill="none" stroke="rgba(150,150,150,0.6)" stroke-width="1.2"/><path d="M4.8 8 L11.2 8 M8 4.8 L8 11.2" stroke="rgba(150,150,150,0.6)" stroke-width="1.2"/></svg>
<!-- right panel -->
<div class="a" style="left:690px;top:44px;width:211px;height:518px;background:#fff;border-left:1px solid #eeeeee"></div>


<!-- right panel content -->
<div class="t" style="left:703px;top:55.5px;font-size:10.5px;color:#1d6b52">Layers</div>
<div class="t" style="left:755.5px;top:55.5px;font-size:10.5px;color:#555">Color Sync</div>
<div class="a" style="left:691px;top:77px;width:210px;height:1px;background:#e6e6e6"></div>
<div class="a" style="left:691px;top:75px;width:53px;height:2.2px;background:#1d6b52"></div>
<svg class="a" style="left:703px;top:87px" width="15" height="15"><path d="M1.5 4.5 L1.5 1.5 L4.5 1.5 M10.5 1.5 L13.5 1.5 L13.5 4.5 M13.5 10.5 L13.5 13.5 L10.5 13.5 M4.5 13.5 L1.5 13.5 L1.5 10.5" fill="none" stroke="#ddd" stroke-width="1.1"/><rect x="4.5" y="4.5" width="6" height="6" rx="1.5" fill="none" stroke="#ddd" stroke-width="1"/></svg>
<svg class="a" style="left:732px;top:87px" width="15" height="15"><path d="M1.5 10.5 L1.5 1.5 L10.5 1.5" fill="none" stroke="#333" stroke-width="1.3"/><rect x="4" y="4" width="9.5" height="9.5" rx="1" fill="#fff" stroke="#333" stroke-width="1.3"/><path d="M8.75 6.3 L8.75 11.3 M6.25 8.8 L11.25 8.8" stroke="#333" stroke-width="1.2"/></svg>
<svg class="a" style="left:760px;top:86px" width="15" height="16"><path d="M1 3.5 L14 3.5 M5.5 3.5 L5.5 1.5 L9.5 1.5 L9.5 3.5" fill="none" stroke="#333" stroke-width="1.3"/><path d="M2.5 3.5 L3.5 14 L11.5 14 L12.5 3.5" fill="none" stroke="#333" stroke-width="1.3"/><path d="M6 6.5 L6 11 M9 6.5 L9 11" stroke="#333" stroke-width="1.2"/></svg>
<div class="a" style="left:691px;top:112px;width:210px;height:1px;background:#f2f2f2"></div>
<div class="a" style="left:694px;top:115px;width:194px;height:39px;background:#b6e8d7;border-radius:3px"></div>
<div class="a" style="left:892px;top:113px;width:9px;height:348px;background:#f3f3f3"></div>
<svg class="a" style="left:893px;top:116px" width="7" height="5"><path d="M0.5 4 L3.5 0.8 L6.5 4Z" fill="#aaa"/></svg>
<svg class="a" style="left:893px;top:452px" width="7" height="5"><path d="M0.5 1 L3.5 4.2 L6.5 1Z" fill="#aaa"/></svg>
<svg class="a" style="left:0;top:0" width="902" height="563"><g transform="translate(717 126) scale(0.06022) translate(-248 -165)"><path d="M382.2 245.0 C382.2 245.0 374.5 245.0 374.5 245.0 C374.5 245.0 368.1 235.7 364.8 231.4 C361.6 227.1 358.5 223.4 355.0 219.2 C351.5 214.9 348.4 210.4 343.9 205.9 C339.4 201.4 333.2 196.6 327.9 192.3 C322.6 188.1 317.3 184.0 312.0 180.4 C306.7 176.8 301.3 173.3 296.0 170.8 C290.7 168.3 285.4 166.2 280.0 165.2 C274.6 164.2 267.9 164.8 263.5 165.0 C259.1 165.2 256.4 165.4 253.8 166.4 C251.2 167.4 249.0 168.8 248.0 171.0 C247.0 173.2 247.5 177.3 247.9 179.6 C248.3 181.9 249.5 183.4 250.3 185.0 C251.1 186.6 252.8 189.3 252.8 189.3 C252.8 189.3 253.3 193.3 253.8 195.2 C254.3 197.1 254.9 198.8 255.9 200.5 C256.9 202.2 260.0 205.5 260.0 205.5 C260.0 205.5 260.8 209.4 261.6 212.0 C262.4 214.6 263.6 218.0 265.0 221.0 C266.4 224.0 269.0 226.7 270.2 230.0 C271.4 233.3 270.9 237.9 272.0 241.0 C273.1 244.1 277.0 248.5 277.0 248.5 C277.0 248.5 279.4 252.8 281.3 255.6 C283.2 258.4 285.8 262.8 288.4 265.5 C291.0 268.2 293.3 270.2 297.0 271.9 C300.7 273.6 310.4 275.8 310.4 275.8 C310.4 275.8 305.3 279.6 302.6 282.6 C299.9 285.6 296.8 289.4 294.1 294.0 C291.4 298.6 288.0 305.7 286.3 310.0 C284.6 314.3 284.4 317.1 284.2 320.0 C284.0 322.9 284.3 325.1 285.0 327.5 C285.7 329.9 288.5 334.1 288.5 334.1 C288.5 334.1 289.3 338.6 290.0 341.0 C290.7 343.4 292.3 346.2 292.9 348.5 C293.5 350.8 293.6 354.5 293.6 354.5 C293.6 354.5 295.4 360.2 297.0 363.0 C298.6 365.8 303.0 371.0 303.0 371.0 C303.0 371.0 304.1 374.2 304.0 377.0 C303.9 379.8 302.0 384.4 302.2 387.7 C302.4 390.9 303.3 394.2 305.0 396.5 C306.7 398.8 309.9 400.9 312.2 401.2 C314.5 401.5 317.1 400.4 319.0 398.5 C320.9 396.6 321.5 393.5 323.3 389.9 C325.1 386.2 327.6 379.3 330.0 376.6 C332.4 373.9 334.0 374.5 337.7 373.8 C341.4 373.1 348.3 373.7 352.0 372.7 C355.7 371.7 358.1 370.1 360.0 368.0 C361.9 365.9 362.6 362.3 363.7 359.9 C364.8 357.5 365.2 355.5 366.5 353.8 C367.8 352.1 370.2 351.1 371.5 349.5 C372.8 347.9 373.6 346.8 374.2 344.5 C374.8 342.2 374.9 339.6 374.8 336.0 C374.8 332.4 374.0 326.7 373.9 323.0 C373.8 319.3 374.2 313.9 374.2 313.9 C374.2 313.9 377.2 318.6 378.5 320.0 C379.8 321.4 382.2 322.5 382.2 322.5 C382.2 322.5 382.2 245.0 382.2 245.0Z" fill="#000" stroke="none" stroke-width="0.0"/><path d="M382.2 245.0 C382.2 245.0 389.9 245.0 389.9 245.0 C389.9 245.0 396.3 235.7 399.6 231.4 C402.8 227.1 405.9 223.4 409.4 219.2 C412.9 214.9 416.0 210.4 420.5 205.9 C425.0 201.4 431.2 196.6 436.5 192.3 C441.8 188.1 447.1 184.0 452.4 180.4 C457.7 176.8 463.1 173.3 468.4 170.8 C473.7 168.3 479.0 166.2 484.4 165.2 C489.8 164.2 496.5 164.8 500.9 165.0 C505.3 165.2 508.0 165.4 510.6 166.4 C513.2 167.4 515.4 168.8 516.4 171.0 C517.4 173.2 516.9 177.3 516.5 179.6 C516.1 181.9 514.9 183.4 514.1 185.0 C513.3 186.6 511.6 189.3 511.6 189.3 C511.6 189.3 511.1 193.3 510.6 195.2 C510.1 197.1 509.5 198.8 508.5 200.5 C507.5 202.2 504.4 205.5 504.4 205.5 C504.4 205.5 503.6 209.4 502.8 212.0 C502.0 214.6 500.8 218.0 499.4 221.0 C498.0 224.0 495.4 226.7 494.2 230.0 C493.0 233.3 493.5 237.9 492.4 241.0 C491.3 244.1 487.4 248.5 487.4 248.5 C487.4 248.5 485.0 252.8 483.1 255.6 C481.2 258.4 478.6 262.8 476.0 265.5 C473.4 268.2 471.1 270.2 467.4 271.9 C463.7 273.6 454.0 275.8 454.0 275.8 C454.0 275.8 459.1 279.6 461.8 282.6 C464.5 285.6 467.6 289.4 470.3 294.0 C473.0 298.6 476.4 305.7 478.1 310.0 C479.8 314.3 480.0 317.1 480.2 320.0 C480.4 322.9 480.1 325.1 479.4 327.5 C478.7 329.9 475.9 334.1 475.9 334.1 C475.9 334.1 475.1 338.6 474.4 341.0 C473.7 343.4 472.1 346.2 471.5 348.5 C470.9 350.8 470.8 354.5 470.8 354.5 C470.8 354.5 469.0 360.2 467.4 363.0 C465.8 365.8 461.4 371.0 461.4 371.0 C461.4 371.0 460.3 374.2 460.4 377.0 C460.5 379.8 462.4 384.4 462.2 387.7 C462.0 390.9 461.1 394.2 459.4 396.5 C457.7 398.8 454.5 400.9 452.2 401.2 C449.9 401.5 447.2 400.4 445.4 398.5 C443.5 396.6 442.9 393.5 441.1 389.9 C439.3 386.2 436.8 379.3 434.4 376.6 C432.0 373.9 430.4 374.5 426.7 373.8 C423.0 373.1 416.1 373.7 412.4 372.7 C408.7 371.7 406.3 370.1 404.4 368.0 C402.4 365.9 401.8 362.3 400.7 359.9 C399.6 357.5 399.2 355.5 397.9 353.8 C396.6 352.1 394.2 351.1 392.9 349.5 C391.6 347.9 390.8 346.8 390.2 344.5 C389.6 342.2 389.5 339.6 389.6 336.0 C389.6 332.4 390.4 326.7 390.5 323.0 C390.6 319.3 390.2 313.9 390.2 313.9 C390.2 313.9 387.2 318.6 385.9 320.0 C384.6 321.4 382.2 322.5 382.2 322.5 C382.2 322.5 382.2 245.0 382.2 245.0Z" fill="#000" stroke="none" stroke-width="0.0"/><rect x="372" y="225" width="20" height="95" rx="10" fill="#000"/></g></svg>
<div class="t" style="left:739px;top:122px;font-size:10.6px;font-weight:bold;color:#222;letter-spacing:-0.26px">Layered 3D Butterfly</div>
<div class="t" style="left:739px;top:137px;font-size:10.3px;color:#777">Basic Cut</div>
<svg class="a" style="left:0;top:0" width="902" height="563"><g transform="translate(717 167) scale(0.06022) translate(-248 -165)"><path d="M382.2 245.0 C382.2 245.0 374.5 245.0 374.5 245.0 C374.5 245.0 368.1 235.7 364.8 231.4 C361.6 227.1 358.5 223.4 355.0 219.2 C351.5 214.9 348.4 210.4 343.9 205.9 C339.4 201.4 333.2 196.6 327.9 192.3 C322.6 188.1 317.3 184.0 312.0 180.4 C306.7 176.8 301.3 173.3 296.0 170.8 C290.7 168.3 285.4 166.2 280.0 165.2 C274.6 164.2 267.9 164.8 263.5 165.0 C259.1 165.2 256.4 165.4 253.8 166.4 C251.2 167.4 249.0 168.8 248.0 171.0 C247.0 173.2 247.5 177.3 247.9 179.6 C248.3 181.9 249.5 183.4 250.3 185.0 C251.1 186.6 252.8 189.3 252.8 189.3 C252.8 189.3 253.3 193.3 253.8 195.2 C254.3 197.1 254.9 198.8 255.9 200.5 C256.9 202.2 260.0 205.5 260.0 205.5 C260.0 205.5 260.8 209.4 261.6 212.0 C262.4 214.6 263.6 218.0 265.0 221.0 C266.4 224.0 269.0 226.7 270.2 230.0 C271.4 233.3 270.9 237.9 272.0 241.0 C273.1 244.1 277.0 248.5 277.0 248.5 C277.0 248.5 279.4 252.8 281.3 255.6 C283.2 258.4 285.8 262.8 288.4 265.5 C291.0 268.2 293.3 270.2 297.0 271.9 C300.7 273.6 310.4 275.8 310.4 275.8 C310.4 275.8 305.3 279.6 302.6 282.6 C299.9 285.6 296.8 289.4 294.1 294.0 C291.4 298.6 288.0 305.7 286.3 310.0 C284.6 314.3 284.4 317.1 284.2 320.0 C284.0 322.9 284.3 325.1 285.0 327.5 C285.7 329.9 288.5 334.1 288.5 334.1 C288.5 334.1 289.3 338.6 290.0 341.0 C290.7 343.4 292.3 346.2 292.9 348.5 C293.5 350.8 293.6 354.5 293.6 354.5 C293.6 354.5 295.4 360.2 297.0 363.0 C298.6 365.8 303.0 371.0 303.0 371.0 C303.0 371.0 304.1 374.2 304.0 377.0 C303.9 379.8 302.0 384.4 302.2 387.7 C302.4 390.9 303.3 394.2 305.0 396.5 C306.7 398.8 309.9 400.9 312.2 401.2 C314.5 401.5 317.1 400.4 319.0 398.5 C320.9 396.6 321.5 393.5 323.3 389.9 C325.1 386.2 327.6 379.3 330.0 376.6 C332.4 373.9 334.0 374.5 337.7 373.8 C341.4 373.1 348.3 373.7 352.0 372.7 C355.7 371.7 358.1 370.1 360.0 368.0 C361.9 365.9 362.6 362.3 363.7 359.9 C364.8 357.5 365.2 355.5 366.5 353.8 C367.8 352.1 370.2 351.1 371.5 349.5 C372.8 347.9 373.6 346.8 374.2 344.5 C374.8 342.2 374.9 339.6 374.8 336.0 C374.8 332.4 374.0 326.7 373.9 323.0 C373.8 319.3 374.2 313.9 374.2 313.9 C374.2 313.9 377.2 318.6 378.5 320.0 C379.8 321.4 382.2 322.5 382.2 322.5 C382.2 322.5 382.2 245.0 382.2 245.0Z" fill="#e9c8c0" stroke="#7a6360" stroke-width="12.5"/><path d="M382.2 245.0 C382.2 245.0 389.9 245.0 389.9 245.0 C389.9 245.0 396.3 235.7 399.6 231.4 C402.8 227.1 405.9 223.4 409.4 219.2 C412.9 214.9 416.0 210.4 420.5 205.9 C425.0 201.4 431.2 196.6 436.5 192.3 C441.8 188.1 447.1 184.0 452.4 180.4 C457.7 176.8 463.1 173.3 468.4 170.8 C473.7 168.3 479.0 166.2 484.4 165.2 C489.8 164.2 496.5 164.8 500.9 165.0 C505.3 165.2 508.0 165.4 510.6 166.4 C513.2 167.4 515.4 168.8 516.4 171.0 C517.4 173.2 516.9 177.3 516.5 179.6 C516.1 181.9 514.9 183.4 514.1 185.0 C513.3 186.6 511.6 189.3 511.6 189.3 C511.6 189.3 511.1 193.3 510.6 195.2 C510.1 197.1 509.5 198.8 508.5 200.5 C507.5 202.2 504.4 205.5 504.4 205.5 C504.4 205.5 503.6 209.4 502.8 212.0 C502.0 214.6 500.8 218.0 499.4 221.0 C498.0 224.0 495.4 226.7 494.2 230.0 C493.0 233.3 493.5 237.9 492.4 241.0 C491.3 244.1 487.4 248.5 487.4 248.5 C487.4 248.5 485.0 252.8 483.1 255.6 C481.2 258.4 478.6 262.8 476.0 265.5 C473.4 268.2 471.1 270.2 467.4 271.9 C463.7 273.6 454.0 275.8 454.0 275.8 C454.0 275.8 459.1 279.6 461.8 282.6 C464.5 285.6 467.6 289.4 470.3 294.0 C473.0 298.6 476.4 305.7 478.1 310.0 C479.8 314.3 480.0 317.1 480.2 320.0 C480.4 322.9 480.1 325.1 479.4 327.5 C478.7 329.9 475.9 334.1 475.9 334.1 C475.9 334.1 475.1 338.6 474.4 341.0 C473.7 343.4 472.1 346.2 471.5 348.5 C470.9 350.8 470.8 354.5 470.8 354.5 C470.8 354.5 469.0 360.2 467.4 363.0 C465.8 365.8 461.4 371.0 461.4 371.0 C461.4 371.0 460.3 374.2 460.4 377.0 C460.5 379.8 462.4 384.4 462.2 387.7 C462.0 390.9 461.1 394.2 459.4 396.5 C457.7 398.8 454.5 400.9 452.2 401.2 C449.9 401.5 447.2 400.4 445.4 398.5 C443.5 396.6 442.9 393.5 441.1 389.9 C439.3 386.2 436.8 379.3 434.4 376.6 C432.0 373.9 430.4 374.5 426.7 373.8 C423.0 373.1 416.1 373.7 412.4 372.7 C408.7 371.7 406.3 370.1 404.4 368.0 C402.4 365.9 401.8 362.3 400.7 359.9 C399.6 357.5 399.2 355.5 397.9 353.8 C396.6 352.1 394.2 351.1 392.9 349.5 C391.6 347.9 390.8 346.8 390.2 344.5 C389.6 342.2 389.5 339.6 389.6 336.0 C389.6 332.4 390.4 326.7 390.5 323.0 C390.6 319.3 390.2 313.9 390.2 313.9 C390.2 313.9 387.2 318.6 385.9 320.0 C384.6 321.4 382.2 322.5 382.2 322.5 C382.2 322.5 382.2 245.0 382.2 245.0Z" fill="#e9c8c0" stroke="#7a6360" stroke-width="12.5"/><rect x="372" y="225" width="20" height="95" rx="10" fill="#7a6360"/></g></svg>
<div class="t" style="left:739px;top:163px;font-size:10.6px;font-weight:normal;color:#444;letter-spacing:0">Layered 3D Butterfly</div>
<div class="t" style="left:739px;top:178px;font-size:10.3px;color:#777">Basic Cut</div>
<svg class="a" style="left:0;top:0" width="902" height="563"><g transform="translate(717 208) scale(0.06022) translate(-248 -165)"><path d="M382.2 245.0 C382.2 245.0 374.5 245.0 374.5 245.0 C374.5 245.0 368.1 235.7 364.8 231.4 C361.6 227.1 358.5 223.4 355.0 219.2 C351.5 214.9 348.4 210.4 343.9 205.9 C339.4 201.4 333.2 196.6 327.9 192.3 C322.6 188.1 317.3 184.0 312.0 180.4 C306.7 176.8 301.3 173.3 296.0 170.8 C290.7 168.3 285.4 166.2 280.0 165.2 C274.6 164.2 267.9 164.8 263.5 165.0 C259.1 165.2 256.4 165.4 253.8 166.4 C251.2 167.4 249.0 168.8 248.0 171.0 C247.0 173.2 247.5 177.3 247.9 179.6 C248.3 181.9 249.5 183.4 250.3 185.0 C251.1 186.6 252.8 189.3 252.8 189.3 C252.8 189.3 253.3 193.3 253.8 195.2 C254.3 197.1 254.9 198.8 255.9 200.5 C256.9 202.2 260.0 205.5 260.0 205.5 C260.0 205.5 260.8 209.4 261.6 212.0 C262.4 214.6 263.6 218.0 265.0 221.0 C266.4 224.0 269.0 226.7 270.2 230.0 C271.4 233.3 270.9 237.9 272.0 241.0 C273.1 244.1 277.0 248.5 277.0 248.5 C277.0 248.5 279.4 252.8 281.3 255.6 C283.2 258.4 285.8 262.8 288.4 265.5 C291.0 268.2 293.3 270.2 297.0 271.9 C300.7 273.6 310.4 275.8 310.4 275.8 C310.4 275.8 305.3 279.6 302.6 282.6 C299.9 285.6 296.8 289.4 294.1 294.0 C291.4 298.6 288.0 305.7 286.3 310.0 C284.6 314.3 284.4 317.1 284.2 320.0 C284.0 322.9 284.3 325.1 285.0 327.5 C285.7 329.9 288.5 334.1 288.5 334.1 C288.5 334.1 289.3 338.6 290.0 341.0 C290.7 343.4 292.3 346.2 292.9 348.5 C293.5 350.8 293.6 354.5 293.6 354.5 C293.6 354.5 295.4 360.2 297.0 363.0 C298.6 365.8 303.0 371.0 303.0 371.0 C303.0 371.0 304.1 374.2 304.0 377.0 C303.9 379.8 302.0 384.4 302.2 387.7 C302.4 390.9 303.3 394.2 305.0 396.5 C306.7 398.8 309.9 400.9 312.2 401.2 C314.5 401.5 317.1 400.4 319.0 398.5 C320.9 396.6 321.5 393.5 323.3 389.9 C325.1 386.2 327.6 379.3 330.0 376.6 C332.4 373.9 334.0 374.5 337.7 373.8 C341.4 373.1 348.3 373.7 352.0 372.7 C355.7 371.7 358.1 370.1 360.0 368.0 C361.9 365.9 362.6 362.3 363.7 359.9 C364.8 357.5 365.2 355.5 366.5 353.8 C367.8 352.1 370.2 351.1 371.5 349.5 C372.8 347.9 373.6 346.8 374.2 344.5 C374.8 342.2 374.9 339.6 374.8 336.0 C374.8 332.4 374.0 326.7 373.9 323.0 C373.8 319.3 374.2 313.9 374.2 313.9 C374.2 313.9 377.2 318.6 378.5 320.0 C379.8 321.4 382.2 322.5 382.2 322.5 C382.2 322.5 382.2 245.0 382.2 245.0Z" fill="#f3e4e4" stroke="#7a6360" stroke-width="12.5"/><path d="M382.2 245.0 C382.2 245.0 389.9 245.0 389.9 245.0 C389.9 245.0 396.3 235.7 399.6 231.4 C402.8 227.1 405.9 223.4 409.4 219.2 C412.9 214.9 416.0 210.4 420.5 205.9 C425.0 201.4 431.2 196.6 436.5 192.3 C441.8 188.1 447.1 184.0 452.4 180.4 C457.7 176.8 463.1 173.3 468.4 170.8 C473.7 168.3 479.0 166.2 484.4 165.2 C489.8 164.2 496.5 164.8 500.9 165.0 C505.3 165.2 508.0 165.4 510.6 166.4 C513.2 167.4 515.4 168.8 516.4 171.0 C517.4 173.2 516.9 177.3 516.5 179.6 C516.1 181.9 514.9 183.4 514.1 185.0 C513.3 186.6 511.6 189.3 511.6 189.3 C511.6 189.3 511.1 193.3 510.6 195.2 C510.1 197.1 509.5 198.8 508.5 200.5 C507.5 202.2 504.4 205.5 504.4 205.5 C504.4 205.5 503.6 209.4 502.8 212.0 C502.0 214.6 500.8 218.0 499.4 221.0 C498.0 224.0 495.4 226.7 494.2 230.0 C493.0 233.3 493.5 237.9 492.4 241.0 C491.3 244.1 487.4 248.5 487.4 248.5 C487.4 248.5 485.0 252.8 483.1 255.6 C481.2 258.4 478.6 262.8 476.0 265.5 C473.4 268.2 471.1 270.2 467.4 271.9 C463.7 273.6 454.0 275.8 454.0 275.8 C454.0 275.8 459.1 279.6 461.8 282.6 C464.5 285.6 467.6 289.4 470.3 294.0 C473.0 298.6 476.4 305.7 478.1 310.0 C479.8 314.3 480.0 317.1 480.2 320.0 C480.4 322.9 480.1 325.1 479.4 327.5 C478.7 329.9 475.9 334.1 475.9 334.1 C475.9 334.1 475.1 338.6 474.4 341.0 C473.7 343.4 472.1 346.2 471.5 348.5 C470.9 350.8 470.8 354.5 470.8 354.5 C470.8 354.5 469.0 360.2 467.4 363.0 C465.8 365.8 461.4 371.0 461.4 371.0 C461.4 371.0 460.3 374.2 460.4 377.0 C460.5 379.8 462.4 384.4 462.2 387.7 C462.0 390.9 461.1 394.2 459.4 396.5 C457.7 398.8 454.5 400.9 452.2 401.2 C449.9 401.5 447.2 400.4 445.4 398.5 C443.5 396.6 442.9 393.5 441.1 389.9 C439.3 386.2 436.8 379.3 434.4 376.6 C432.0 373.9 430.4 374.5 426.7 373.8 C423.0 373.1 416.1 373.7 412.4 372.7 C408.7 371.7 406.3 370.1 404.4 368.0 C402.4 365.9 401.8 362.3 400.7 359.9 C399.6 357.5 399.2 355.5 397.9 353.8 C396.6 352.1 394.2 351.1 392.9 349.5 C391.6 347.9 390.8 346.8 390.2 344.5 C389.6 342.2 389.5 339.6 389.6 336.0 C389.6 332.4 390.4 326.7 390.5 323.0 C390.6 319.3 390.2 313.9 390.2 313.9 C390.2 313.9 387.2 318.6 385.9 320.0 C384.6 321.4 382.2 322.5 382.2 322.5 C382.2 322.5 382.2 245.0 382.2 245.0Z" fill="#f3e4e4" stroke="#7a6360" stroke-width="12.5"/><rect x="372" y="225" width="20" height="95" rx="10" fill="#7a6360"/></g></svg>
<div class="t" style="left:739px;top:204px;font-size:10.6px;font-weight:normal;color:#444;letter-spacing:0">Layered 3D Butterfly</div>
<div class="t" style="left:739px;top:219px;font-size:10.3px;color:#777">Basic Cut</div>
<svg class="a" style="left:0;top:0" width="902" height="563"><g transform="translate(717 249) scale(0.06022) translate(-248 -165)"><path d="M382.2 245.0 C382.2 245.0 374.5 245.0 374.5 245.0 C374.5 245.0 368.1 235.7 364.8 231.4 C361.6 227.1 358.5 223.4 355.0 219.2 C351.5 214.9 348.4 210.4 343.9 205.9 C339.4 201.4 333.2 196.6 327.9 192.3 C322.6 188.1 317.3 184.0 312.0 180.4 C306.7 176.8 301.3 173.3 296.0 170.8 C290.7 168.3 285.4 166.2 280.0 165.2 C274.6 164.2 267.9 164.8 263.5 165.0 C259.1 165.2 256.4 165.4 253.8 166.4 C251.2 167.4 249.0 168.8 248.0 171.0 C247.0 173.2 247.5 177.3 247.9 179.6 C248.3 181.9 249.5 183.4 250.3 185.0 C251.1 186.6 252.8 189.3 252.8 189.3 C252.8 189.3 253.3 193.3 253.8 195.2 C254.3 197.1 254.9 198.8 255.9 200.5 C256.9 202.2 260.0 205.5 260.0 205.5 C260.0 205.5 260.8 209.4 261.6 212.0 C262.4 214.6 263.6 218.0 265.0 221.0 C266.4 224.0 269.0 226.7 270.2 230.0 C271.4 233.3 270.9 237.9 272.0 241.0 C273.1 244.1 277.0 248.5 277.0 248.5 C277.0 248.5 279.4 252.8 281.3 255.6 C283.2 258.4 285.8 262.8 288.4 265.5 C291.0 268.2 293.3 270.2 297.0 271.9 C300.7 273.6 310.4 275.8 310.4 275.8 C310.4 275.8 305.3 279.6 302.6 282.6 C299.9 285.6 296.8 289.4 294.1 294.0 C291.4 298.6 288.0 305.7 286.3 310.0 C284.6 314.3 284.4 317.1 284.2 320.0 C284.0 322.9 284.3 325.1 285.0 327.5 C285.7 329.9 288.5 334.1 288.5 334.1 C288.5 334.1 289.3 338.6 290.0 341.0 C290.7 343.4 292.3 346.2 292.9 348.5 C293.5 350.8 293.6 354.5 293.6 354.5 C293.6 354.5 295.4 360.2 297.0 363.0 C298.6 365.8 303.0 371.0 303.0 371.0 C303.0 371.0 304.1 374.2 304.0 377.0 C303.9 379.8 302.0 384.4 302.2 387.7 C302.4 390.9 303.3 394.2 305.0 396.5 C306.7 398.8 309.9 400.9 312.2 401.2 C314.5 401.5 317.1 400.4 319.0 398.5 C320.9 396.6 321.5 393.5 323.3 389.9 C325.1 386.2 327.6 379.3 330.0 376.6 C332.4 373.9 334.0 374.5 337.7 373.8 C341.4 373.1 348.3 373.7 352.0 372.7 C355.7 371.7 358.1 370.1 360.0 368.0 C361.9 365.9 362.6 362.3 363.7 359.9 C364.8 357.5 365.2 355.5 366.5 353.8 C367.8 352.1 370.2 351.1 371.5 349.5 C372.8 347.9 373.6 346.8 374.2 344.5 C374.8 342.2 374.9 339.6 374.8 336.0 C374.8 332.4 374.0 326.7 373.9 323.0 C373.8 319.3 374.2 313.9 374.2 313.9 C374.2 313.9 377.2 318.6 378.5 320.0 C379.8 321.4 382.2 322.5 382.2 322.5 C382.2 322.5 382.2 245.0 382.2 245.0Z" fill="#c4968b" stroke="#6f5752" stroke-width="12.5"/><path d="M382.2 245.0 C382.2 245.0 389.9 245.0 389.9 245.0 C389.9 245.0 396.3 235.7 399.6 231.4 C402.8 227.1 405.9 223.4 409.4 219.2 C412.9 214.9 416.0 210.4 420.5 205.9 C425.0 201.4 431.2 196.6 436.5 192.3 C441.8 188.1 447.1 184.0 452.4 180.4 C457.7 176.8 463.1 173.3 468.4 170.8 C473.7 168.3 479.0 166.2 484.4 165.2 C489.8 164.2 496.5 164.8 500.9 165.0 C505.3 165.2 508.0 165.4 510.6 166.4 C513.2 167.4 515.4 168.8 516.4 171.0 C517.4 173.2 516.9 177.3 516.5 179.6 C516.1 181.9 514.9 183.4 514.1 185.0 C513.3 186.6 511.6 189.3 511.6 189.3 C511.6 189.3 511.1 193.3 510.6 195.2 C510.1 197.1 509.5 198.8 508.5 200.5 C507.5 202.2 504.4 205.5 504.4 205.5 C504.4 205.5 503.6 209.4 502.8 212.0 C502.0 214.6 500.8 218.0 499.4 221.0 C498.0 224.0 495.4 226.7 494.2 230.0 C493.0 233.3 493.5 237.9 492.4 241.0 C491.3 244.1 487.4 248.5 487.4 248.5 C487.4 248.5 485.0 252.8 483.1 255.6 C481.2 258.4 478.6 262.8 476.0 265.5 C473.4 268.2 471.1 270.2 467.4 271.9 C463.7 273.6 454.0 275.8 454.0 275.8 C454.0 275.8 459.1 279.6 461.8 282.6 C464.5 285.6 467.6 289.4 470.3 294.0 C473.0 298.6 476.4 305.7 478.1 310.0 C479.8 314.3 480.0 317.1 480.2 320.0 C480.4 322.9 480.1 325.1 479.4 327.5 C478.7 329.9 475.9 334.1 475.9 334.1 C475.9 334.1 475.1 338.6 474.4 341.0 C473.7 343.4 472.1 346.2 471.5 348.5 C470.9 350.8 470.8 354.5 470.8 354.5 C470.8 354.5 469.0 360.2 467.4 363.0 C465.8 365.8 461.4 371.0 461.4 371.0 C461.4 371.0 460.3 374.2 460.4 377.0 C460.5 379.8 462.4 384.4 462.2 387.7 C462.0 390.9 461.1 394.2 459.4 396.5 C457.7 398.8 454.5 400.9 452.2 401.2 C449.9 401.5 447.2 400.4 445.4 398.5 C443.5 396.6 442.9 393.5 441.1 389.9 C439.3 386.2 436.8 379.3 434.4 376.6 C432.0 373.9 430.4 374.5 426.7 373.8 C423.0 373.1 416.1 373.7 412.4 372.7 C408.7 371.7 406.3 370.1 404.4 368.0 C402.4 365.9 401.8 362.3 400.7 359.9 C399.6 357.5 399.2 355.5 397.9 353.8 C396.6 352.1 394.2 351.1 392.9 349.5 C391.6 347.9 390.8 346.8 390.2 344.5 C389.6 342.2 389.5 339.6 389.6 336.0 C389.6 332.4 390.4 326.7 390.5 323.0 C390.6 319.3 390.2 313.9 390.2 313.9 C390.2 313.9 387.2 318.6 385.9 320.0 C384.6 321.4 382.2 322.5 382.2 322.5 C382.2 322.5 382.2 245.0 382.2 245.0Z" fill="#c4968b" stroke="#6f5752" stroke-width="12.5"/><rect x="372" y="225" width="20" height="95" rx="10" fill="#6f5752"/></g></svg>
<div class="t" style="left:739px;top:245px;font-size:10.6px;font-weight:normal;color:#444;letter-spacing:0">Layered 3D Butterfly</div>
<div class="t" style="left:739px;top:260px;font-size:10.3px;color:#777">Basic Cut</div>

<div class="a" style="left:691px;top:461px;width:210px;height:35px;background:#f3f3f3"></div>
<div class="a" style="left:698px;top:466px;width:38px;height:25px;background:#fff;border:1px solid #8f8f8f;border-radius:2px"></div>
<div class="t" style="left:743px;top:475.5px;font-size:7.2px;color:#444">Blank Canvas</div>
<svg class="a" style="left:702px;top:499px" width="16" height="16"><rect x="1.5" y="1.5" width="8" height="8" rx="2" fill="none" stroke="#c8c8c8" stroke-width="1.1"/><path d="M5 5 L13.5 5 L13.5 13.5 L5 13.5Z" fill="none" stroke="#c8c8c8" stroke-width="1.1"/></svg>
<div class="t" style="left:702px;top:518px;font-size:7.5px;color:#c4c4c4">Slice</div>
<svg class="a" style="left:733px;top:498px" width="26" height="17"><rect x="1.5" y="1.5" width="9" height="9" rx="1" fill="none" stroke="#c4c4c4" stroke-width="1.1"/><circle cx="9.5" cy="10" r="5" fill="none" stroke="#c4c4c4" stroke-width="1.1"/><path d="M18 6 L22.5 6 L20.2 8.5Z" fill="#c4c4c4"/></svg>
<div class="t" style="left:730px;top:518px;font-size:7.5px;color:#c4c4c4">Combine</div>
<svg class="a" style="left:773px;top:502px" width="20" height="10"><path d="M6 8.5 L15 8.5 C17.5 8.5 18.5 7 18.5 5 C18.5 3 17.5 1.5 15 1.5 L5 1.5 C2.5 1.5 1.5 3 1.5 5 C1.5 6.3 2.5 7 4 7 L14 7 C15.5 7 16 6 16 5 C16 4 15.5 3 14 3 L6 3" fill="none" stroke="#c8c8c8" stroke-width="1.1"/></svg>
<div class="t" style="left:772px;top:518px;font-size:7.5px;color:#c4c4c4">Attach</div>
<svg class="a" style="left:807px;top:498px" width="18" height="16"><path d="M9 1 L9 7 M6.5 4.5 L9 7 L11.5 4.5" fill="none" stroke="#c8c8c8" stroke-width="1.1"/><path d="M1.5 8 L9 11.5 L16.5 8 M1.5 11 L9 14.5 L16.5 11 M4 6.8 L1.5 8 M14 6.8 L16.5 8" fill="none" stroke="#c8c8c8" stroke-width="1.1"/></svg>
<div class="t" style="left:804.5px;top:518px;font-size:7.5px;color:#c4c4c4">Flatten</div>
<svg class="a" style="left:844px;top:499px" width="16" height="16"><circle cx="8" cy="8" r="6.5" fill="none" stroke="#222" stroke-width="1.4" stroke-dasharray="2.6 1.8"/></svg>
<div class="t" style="left:839px;top:518px;font-size:7.5px;color:#333">Contour</div>
<div class="a" style="left:691px;top:530.5px;width:210px;height:31.5px;background:#0e3b2d"></div>
<svg class="a" style="left:701px;top:540px" width="25" height="20"><path d="M3 1 L24 1 L19 15.5 L8 15.5 L3 19 Z" fill="#1f9b6c"/><path d="M10 7.5 C10 6 11 5.5 12.3 5.5 C13.7 5.5 14.5 6.2 14.5 7.5 L14.5 12 M14.5 9 C13.5 8.5 10 8.5 10 10.5 C10 12.5 13.5 12.2 14.5 10.5" fill="none" stroke="#fff" stroke-width="1.1"/></svg>
<div class="t" style="left:731px;top:544px;font-size:10.6px;color:#e3efe9;-webkit-text-stroke:0.2px #e3efe9">Get 50% off Cricut Access*</div>

</body></html>
